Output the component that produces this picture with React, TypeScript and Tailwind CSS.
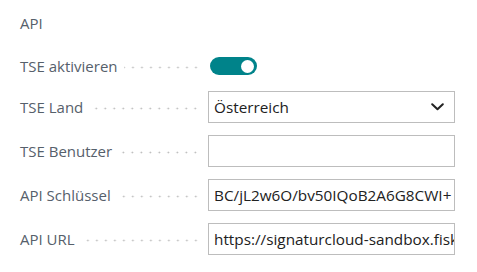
import React from "react";

const Leader = () => (
  <div className="flex-1 ml-[6px] mr-[8px] h-[3px] mt-[2px] bg-[radial-gradient(circle,#b8b8b8_0.8px,transparent_1.1px)] bg-[length:9px_3px] bg-repeat-x bg-right" />
);

const Label = ({ text }: { text: string }) => (
  <div className="w-[188px] flex items-center shrink-0">
    <span className="text-[15px] text-[#56606b] whitespace-nowrap">{text}</span>
    <Leader />
  </div>
);

const Field = ({ value }: { value: string }) => (
  <div className="w-[247px] h-8 border border-[#bdbdbd] bg-white flex items-center pl-[5px] overflow-hidden">
    <span className="text-[15.3px] text-[#212121] whitespace-nowrap">{value}</span>
  </div>
);

export default function App() {
  return (
    <div
      className="w-[477px] h-[272px] bg-white pl-5 pt-[13px]"
      style={{ fontFamily: '"Open Sans", "Noto Sans", sans-serif' }}
    >
      <div className="text-[15px] text-[#56606b] h-5 leading-5">API</div>
      <div className="flex flex-col">
        <div className="flex items-center h-7 mt-[19px]">
          <Label text="TSE aktivieren" />
          <div className="ml-[2px] w-[47px] h-[18px] rounded-full bg-[#00838a] flex items-center justify-end pr-[3px]">
            <div className="w-[13px] h-[13px] rounded-full bg-white" />
          </div>
        </div>
        <div className="flex items-center mt-[11px]">
          <Label text="TSE Land" />
          <div className="w-[247px] h-8 border border-[#bdbdbd] bg-white flex items-center justify-between pl-[5px] pr-[10px]">
            <span className="text-[15.3px] text-[#212121]">Österreich</span>
            <svg width="13" height="8" viewBox="0 0 13 8" fill="none">
              <path d="M1.2 1.2 L6.5 6.3 L11.8 1.2" stroke="#222" strokeWidth="2" strokeLinecap="round" strokeLinejoin="round" />
            </svg>
          </div>
        </div>
        <div className="flex items-center mt-3">
          <Label text="TSE Benutzer" />
          <Field value="" />
        </div>
        <div className="flex items-center mt-3">
          <Label text="API Schlüssel" />
          <Field value="BC/jL2w6O/bv50IQoB2A6G8CWI+" />
        </div>
        <div className="flex items-center mt-3">
          <Label text="API URL" />
          <Field value="https://signaturcloud-sandbox.fiskaly.com" />
        </div>
      </div>
    </div>
  );
}
